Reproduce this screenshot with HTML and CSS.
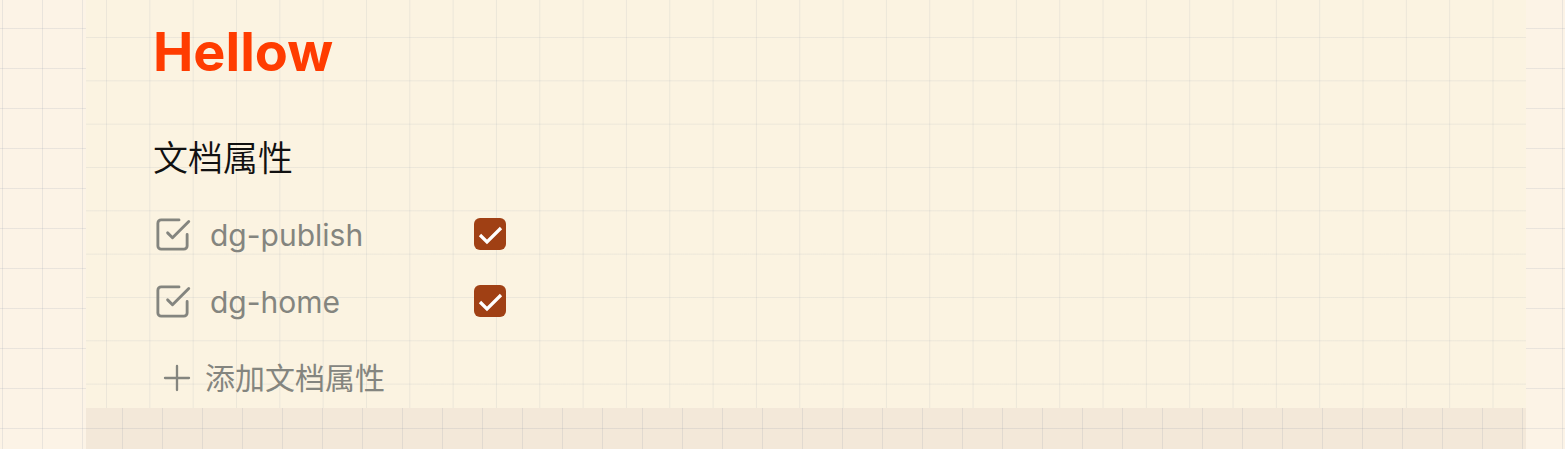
FILE: index.html
```html
<!DOCTYPE html>
<html lang="zh-CN">
<head>
<meta charset="utf-8">
<title>Hellow</title>
<link rel="stylesheet" href="styles.css">
</head>
<body>
<main class="page">
  <article class="note">
    <h1 class="title">Hellow</h1>
    <section class="properties">
      <h2 class="heading">文档属性</h2>
      <div class="property">
        <svg class="icon" viewBox="0 0 24 24" aria-hidden="true"><path d="M9 11l3 3L22 4"/><path d="M21 12v7a2 2 0 0 1-2 2H5a2 2 0 0 1-2-2V5a2 2 0 0 1 2-2h11"/></svg>
        <label class="name" for="publish">dg-publish</label>
        <span class="value"><input class="check" type="checkbox" id="publish" checked><svg class="tick" viewBox="0 0 32 32" aria-hidden="true"><path d="M6 17l7 7L27 10"/></svg></span>
      </div>
      <div class="property">
        <svg class="icon" viewBox="0 0 24 24" aria-hidden="true"><path d="M9 11l3 3L22 4"/><path d="M21 12v7a2 2 0 0 1-2 2H5a2 2 0 0 1-2-2V5a2 2 0 0 1 2-2h11"/></svg>
        <label class="name" for="home">dg-home</label>
        <span class="value"><input class="check" type="checkbox" id="home" checked><svg class="tick" viewBox="0 0 32 32" aria-hidden="true"><path d="M6 17l7 7L27 10"/></svg></span>
      </div>
      <button class="add" type="button">
        <svg class="plus" viewBox="0 0 24 24" aria-hidden="true"><path d="M12 3v18M3 12h18"/></svg>
        <span>添加文档属性</span>
      </button>
    </section>
  </article>
</main>
</body>
</html>
```
FILE: styles.css
```css
* { box-sizing: border-box; }

body {
  margin: 0;
  background-color: #fcf3e6;
  background-image:
    linear-gradient(to right, #6478961f 1px, transparent 1px),
    linear-gradient(to bottom, #6478961f 1px, transparent 1px);
  background-size: 40px 40px;
  background-position: 2px 28px;
  font-family: Inter, "Noto Sans CJK SC", sans-serif;
  color: #111;
}

.page {
  min-height: 100vh;
  margin: 0 39px 0 86px;
  background-color: #6048180f;
}

.note {
  padding: 16px 68px 2px 67px;
  background-color: #fbf3e1;
  background-image:
    linear-gradient(to right, #6478961a 1px, transparent 1px),
    linear-gradient(to bottom, #6478961a 1px, transparent 1px);
  background-size: calc(130px / 3) calc(130px / 3);
  background-position: 20px 37px;
}

.title {
  margin: 0 0 48px;
  font-size: 54px;
  line-height: 72px;
  font-weight: 700;
  color: #ff3c00;
}

.heading {
  margin: 0 0 21px;
  font-size: 35px;
  line-height: 44px;
  font-weight: 350;
}

.property {
  display: flex;
  align-items: center;
  height: 67px;
  color: #84857f;
}

.icon {
  width: 39px;
  height: 39px;
  margin-right: 18px;
}

.icon, .plus, .tick {
  flex: none;
  fill: none;
  stroke: currentColor;
  stroke-width: 1.75;
  stroke-linecap: round;
  stroke-linejoin: round;
}

.name {
  width: 264px;
  font-size: 30px;
  line-height: 40px;
}

.value {
  display: grid;
  width: 32px;
  height: 32px;
  margin-bottom: 2px;
}

.check {
  appearance: none;
  grid-area: 1 / 1;
  width: 100%;
  height: 100%;
  margin: 0;
  border-radius: 6px;
  background: #a04014;
}

.tick {
  grid-area: 1 / 1;
  color: #fff;
  stroke-width: 3.25;
  stroke-linecap: butt;
  stroke-linejoin: miter;
  pointer-events: none;
}

.add {
  display: flex;
  align-items: center;
  gap: 12px;
  margin-top: 15px;
  padding: 0 8px;
  border: 0;
  background: none;
  color: #84857f;
  font: inherit;
  font-size: 30px;
  line-height: 56px;
}

.plus {
  width: 32px;
  height: 32px;
}
```
